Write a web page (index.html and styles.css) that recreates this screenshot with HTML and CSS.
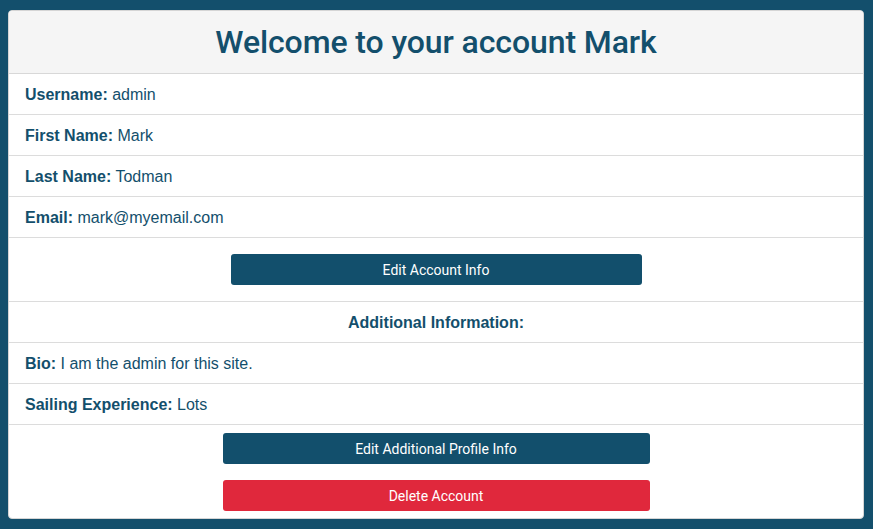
FILE: index.html
```html
<!DOCTYPE html>
<html>
<head>
<meta charset="utf-8">
<link rel="stylesheet" href="styles.css">
</head>
<body>
<div class="card">
  <div class="card-header"><h2 class="title">Welcome to your account Mark</h2></div>
  <ul class="list">
    <li class="item"><b>Username:</b> admin</li>
    <li class="item"><b>First Name:</b> Mark</li>
    <li class="item"><b>Last Name:</b> Todman</li>
    <li class="item"><b>Email:</b> mark@myemail.com</li>
    <li class="item item-btn"><button class="btn btn-primary btn-edit">Edit Account Info</button></li>
    <li class="item item-center"><b>Additional Information:</b></li>
    <li class="item"><b>Bio:</b> I am the admin for this site.</li>
    <li class="item"><b>Sailing Experience:</b> Lots</li>
    <li class="item item-actions">
      <button class="btn btn-primary btn-wide">Edit Additional Profile Info</button>
      <button class="btn btn-danger btn-wide">Delete Account</button>
    </li>
  </ul>
</div>
</body>
</html>
```
FILE: styles.css
```css
html, body {
  margin: 0;
  padding: 0;
}
body {
  background: #134f6c;
  padding: 10px 9px 10px 8px;
  font-family: "Liberation Sans", Arial, sans-serif;
  color: #134f6c;
  font-size: 16px;
}
.card {
  background: #fff;
  border: 1px solid #d5d5d5;
  border-radius: 4px;
  overflow: hidden;
}
.card-header {
  background: #f5f5f5;
  border-bottom: 1px solid #d8d8d8;
  padding: 12px 20px;
  text-align: center;
}
.title {
  margin: 0;
  font-family: Roboto, "Liberation Sans", sans-serif;
  font-size: 32px;
  line-height: 38px;
  font-weight: 500;
  letter-spacing: -0.1px;
}
.list {
  list-style: none;
  margin: 0;
  padding: 0;
}
.item {
  padding: 9px 16px 7px;
  line-height: 24px;
  border-bottom: 1px solid #dcdcdc;
}
.item b {
  font-weight: 700;
}
.item-center {
  text-align: center;
}
.item-btn {
  display: flex;
  justify-content: center;
  padding: 16px 16px 16px;
}
.item-actions {
  display: flex;
  flex-direction: column;
  align-items: center;
  gap: 16px;
  padding: 8px 16px 7px;
  border-bottom: none;
}
.btn {
  font-family: Roboto, "Liberation Sans", sans-serif;
  font-weight: 400;
  font-size: 14px;
  line-height: 21px;
  padding: 6px 10px 4px;
  border: none;
  border-radius: 3px;
  color: #fff;
  height: 31px;
}
.btn-primary {
  background: #124f6c;
}
.btn-danger {
  background: #e0283c;
}
.btn-edit {
  width: 411px;
}
.btn-wide {
  width: 427px;
}
```
